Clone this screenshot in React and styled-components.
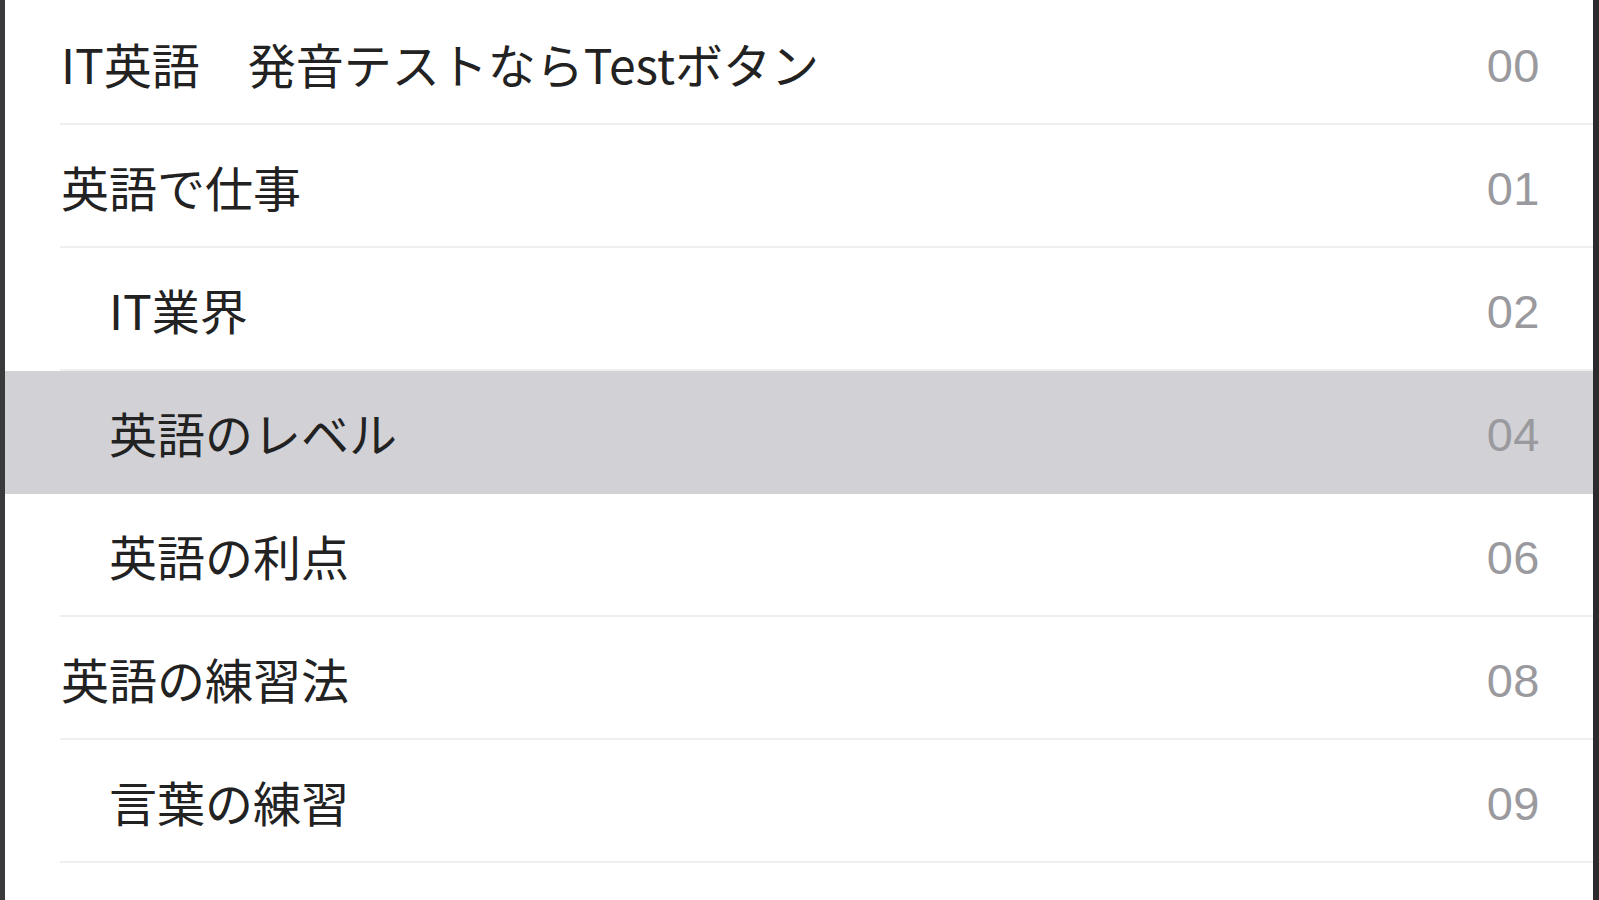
import React from "react";
import styled, { createGlobalStyle } from "styled-components";

const GlobalStyle = createGlobalStyle`
  html, body {
    margin: 0;
    padding: 0;
    background: #ffffff;
  }
  body {
    font-family: "Noto Sans CJK JP", "Noto Sans", sans-serif;
  }
`;

const Frame = styled.div`
  width: 1599px;
  height: 900px;
  box-sizing: border-box;
  border-left: 5px solid #3a3a3c;
  border-right: 6px solid #2c2c2e;
  background: #ffffff;
  overflow: hidden;
`;

const List = styled.ul`
  list-style: none;
  margin: 0;
  padding: 2px 0 0 0;
  display: flex;
  flex-direction: column;
`;

const Row = styled.li`
  position: relative;
  height: 123px;
  box-sizing: border-box;
  display: flex;
  align-items: center;
  justify-content: space-between;
  padding: 0 53px 2px ${(p) => 56 + p.$level * 48}px;
  background: ${(p) => (p.$selected ? "#d1d1d6" : "transparent")};

  &::after {
    content: "";
    position: absolute;
    left: 55px;
    right: 0;
    bottom: 0;
    height: 2px;
    background: ${(p) => (p.$selected ? "transparent" : "#efeff1")};
  }
`;

const Title = styled.span`
  font-family: "Noto Sans CJK JP", "Noto Sans", sans-serif;
  font-size: 48px;
  font-weight: 400;
  color: #222222;
  white-space: pre;
`;

const Page = styled.span`
  font-family: "Liberation Sans", Arial, sans-serif;
  font-size: 47px;
  color: #9a9a9e;
  padding-top: 6px;
  letter-spacing: 0.5px;
`;

const items = [
  { title: "IT英語　発音テストならTestボタン", page: "00", level: 0 },
  { title: "英語で仕事", page: "01", level: 0 },
  { title: "IT業界", page: "02", level: 1 },
  { title: "英語のレベル", page: "04", level: 1, selected: true },
  { title: "英語の利点", page: "06", level: 1 },
  { title: "英語の練習法", page: "08", level: 0 },
  { title: "言葉の練習", page: "09", level: 1 },
  { title: "", page: "", level: 0 },
];

export default function App() {
  return (
    <>
      <GlobalStyle />
      <Frame>
        <List>
          {items.map((it, i) => (
            <Row key={i} $level={it.level} $selected={it.selected}>
              <Title>{it.title}</Title>
              <Page>{it.page}</Page>
            </Row>
          ))}
        </List>
      </Frame>
    </>
  );
}
